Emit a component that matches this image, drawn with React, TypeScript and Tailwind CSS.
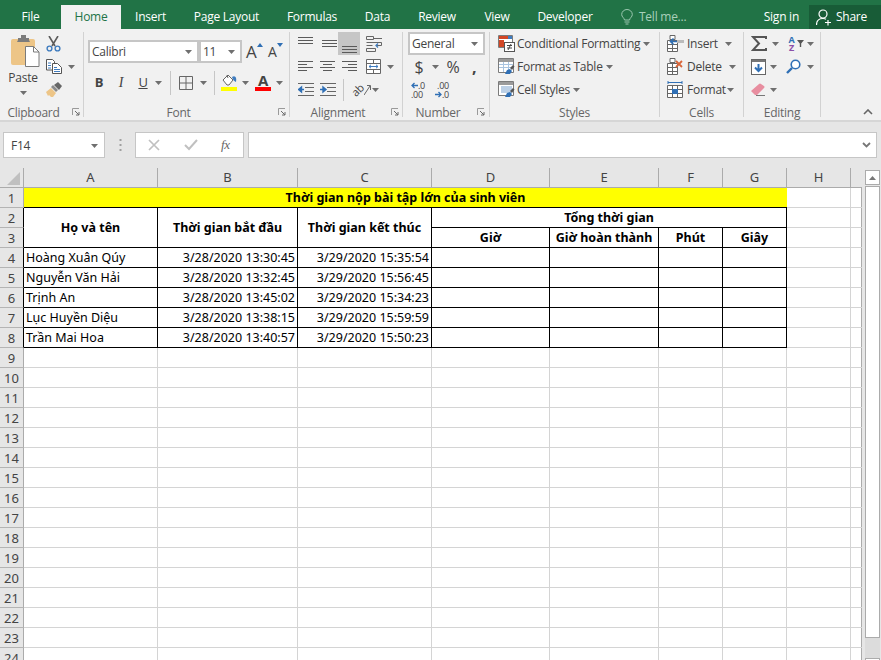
import type { ReactNode } from "react";

const Caret = ({ className = "" }: { className?: string }) => (
  <svg width="7" height="4" viewBox="0 0 7 4" className={`shrink-0 ${className}`}>
    <path d="M0 0h7L3.5 4z" fill="#6f6f6f" />
  </svg>
);

const Launcher = ({ className }: { className: string }) => (
  <svg width="8" height="8" viewBox="0 0 8 8" className={`absolute bottom-[1px] ${className}`}>
    <path d="M.5 7V.5H7" fill="none" stroke="#9a9a9a" />
    <path d="M3 3l4 4M7 4v3H4" fill="none" stroke="#6a6a6a" />
  </svg>
);

const Group = ({ label, className, children, launcher }: { label: string; className: string; children: ReactNode; launcher?: string }) => (
  <div className={`relative h-[85px] shrink-0 border-r border-[#d2d2d2] ${className}`}>
    <div className="h-[72px]">{children}</div>
    <div className={`h-[13px] text-center text-[12px] leading-[17px] text-[#666] ${launcher ? "pr-[16px]" : ""}`}>{label}</div>
    {launcher && <Launcher className={launcher} />}
  </div>
);

const Row = ({ className = "", children }: { className?: string; children: ReactNode }) => (
  <div className={`flex h-[23px] items-center whitespace-nowrap ${className}`}>{children}</div>
);

const Lines = ({ ys, x1 = [0, 0, 0, 0], x2 = [15, 15, 15, 15] }: { ys: number[]; x1?: number[]; x2?: number[] }) => (
  <svg width="15" height="13" viewBox="0 0 15 13">
    {ys.map((y, i) => (
      <path key={y} d={`M${x1[i]} ${y + 0.5}H${x2[i]}`} stroke="#5a5a5a" />
    ))}
  </svg>
);

const PasteIcon = () => (
  <svg width="29" height="32" viewBox="0 0 29 32" className="ml-[4px] mt-[3px]">
    <rect x="0" y="4" width="24" height="26" rx="2" fill="#edc587" />
    <path d="M7 5V3h3V0h5v3h3v2l1 2H6z" fill="#7c7c7c" />
    <path d="M14.5 11.5h8l5.5 5.5v14.5H14.5z" fill="#fff" stroke="#7b7b7b" />
    <path d="M22.5 11.5V17H28" fill="none" stroke="#7b7b7b" />
  </svg>
);

const Scissors = () => (
  <svg width="15" height="16" viewBox="0 0 15 16">
    <path d="M3 0l6 10M12 0L6 10" stroke="#5b5b5b" strokeWidth="1.6" fill="none" />
    <circle cx="3.5" cy="12.5" r="2.4" fill="none" stroke="#3f7cbf" strokeWidth="1.4" />
    <circle cx="11.5" cy="12.5" r="2.4" fill="none" stroke="#3f7cbf" strokeWidth="1.4" />
  </svg>
);

const CopyIcon = () => (
  <svg width="16" height="15" viewBox="0 0 16 15">
    <path d="M.5.5h6l2 2V11H.5z" fill="#fff" stroke="#555" />
    <path d="M6.5 4.5h5l4 4v6h-9z" fill="#fff" stroke="#555" />
    <path d="M2 4h3M2 6.500h3M2 9h3M8 8.500h3M8 10.500h6M8 12.500h6" stroke="#3f7cbf" />
  </svg>
);

const Brush = () => (
  <svg width="16" height="15" viewBox="0 0 16 15">
    <path d="M0 10l5-4 5 5-3 4H5L3 13l-1 1z" fill="#edc587" />
    <path d="M5 5l2-2 5 5-2 2z" fill="#8a8a8a" />
    <path d="M8 3l4-3 4 4-3 4z" fill="#666" />
  </svg>
);

const Combo = ({ text, className }: { text: string; className: string }) => (
  <div className={`flex h-[23px] items-center justify-between border-2 border-[#c6c6c6] bg-white pl-[2px] pr-[5px] text-[#444] ${className}`}>
    <span>{text}</span>
    <Caret />
  </div>
);

const FillIcon = () => (
  <svg width="16" height="12" viewBox="0 0 16 12">
    <path d="M2 6l5-5 5 5-4 5H6z" fill="#fff" stroke="#666" />
    <path d="M6 1l1 3" stroke="#666" />
    <path d="M11 3c3-2 5 0 4 5-2-1-3-2-4-5z" fill="#3f7cbf" />
  </svg>
);

const WrapIcon = () => (
  <svg width="17" height="16" viewBox="0 0 17 16">
    <path d="M.5.5h7v3h-7zM.5 6.500h9M.5 9.500h6M.5 12.500h9v3h-9z" fill="none" stroke="#666" />
    <path d="M8 2.500h8M9 6.500h6.500v3H10" fill="none" stroke="#666" />
    <path d="M12 7.500l-2 2 2 2" fill="none" stroke="#3f7cbf" strokeWidth="1.3" />
  </svg>
);

const MergeIcon = () => (
  <svg width="15" height="15" viewBox="0 0 15 15">
    <path d="M.5.5h14v14H.5zM.5 4.500h14M.5 10.500h14M7.500.5v4M7.500 10.500v4" fill="#fff" stroke="#666" />
    <path d="M3 7.500h9M5 5.800l-2 1.700 2 1.700M10 5.800l2 1.700-2 1.700" fill="none" stroke="#3f7cbf" />
  </svg>
);

const IndentIcon = ({ flip }: { flip?: boolean }) => (
  <svg width="16" height="13" viewBox="0 0 16 13">
    <path d="M0 .5h16M7 4.500h9M7 8.500h9M0 12.500h16" stroke="#666" />
    {flip ? (
      <path d="M0 6.500h5M3 4l3 2.500L3 9z" stroke="#2f6fb5" strokeWidth="1.4" fill="#2f6fb5" />
    ) : (
      <path d="M1 6.500h5M3.500 4L.5 6.500l3 2.500z" stroke="#2f6fb5" strokeWidth="1.4" fill="#2f6fb5" />
    )}
  </svg>
);

const StyleIcon = ({ kind }: { kind: "cond" | "table" | "cell" }) => (
  <svg width="17" height="17" viewBox="0 0 17 17" className="shrink-0">
    {kind === "cond" ? (
      <>
        <path d="M.5.5h14v12H.5z" fill="#fff" stroke="#7b7b7b" />
        <rect x="1" y="1" width="6" height="3" fill="#d24726" />
        <rect x="7" y="1" width="3" height="3" fill="#d24726" />
        <rect x="10" y="1" width="4" height="3" fill="#3f7cbf" />
        <rect x="1" y="5" width="5" height="7" fill="#d24726" />
        <rect x="6.500" y="7.500" width="10" height="9" fill="#fff" stroke="#555" />
        <path d="M9 10.500h5M9 13h5M10 15l3-6" stroke="#444" />
      </>
    ) : (
      <>
        <path d="M.5.5h15v14H.5z" fill="#fff" stroke="#7b7b7b" />
        <rect x="1" y="1" width="14" height="3" fill="#9a9a9a" />
        {kind === "table" ? (
          <path d="M1 6.500h14M1 9.500h14M5.500 4v10M10.500 4v10" stroke="#a9c4e0" />
        ) : (
          <rect x="3" y="5" width="11" height="7" fill="#bcd0e6" />
        )}
        <path d="M7 16l2-4 3-1 2 2-2 3z" fill="#2f6fb5" />
        <path d="M12 10l3-3 1.500 1.500L14 12z" fill="#555" />
      </>
    )}
  </svg>
);

const CellIcon = ({ kind }: { kind: "insert" | "delete" | "format" }) => (
  <svg width="17" height="17" viewBox="0 0 17 17" className="shrink-0">
    {kind === "format" ? (
      <>
        <path d="M1 1.500h14M1 0v3M15 0v3" stroke="#2f6fb5" />
        <path d="M.5 4.500h15v12H.5zM.5 8.500h15M.5 12.500h15M5.500 4.500v12M10.500 4.500v12" fill="#fff" stroke="#666" />
        <rect x="5" y="8" width="6" height="5" fill="#2f6fb5" />
      </>
    ) : (
      <>
        <path d="M.5 5.500h10v11H.5zM.5 9.500h10M.5 13.500h10M5.500 5.500v11" fill="#fff" stroke="#666" />
        <path d="M3 .5h5v4H3z" fill="#fff" stroke="#666" />
        {kind === "insert" ? (
          <>
            <rect x="10" y="5" width="7" height="3" fill="#bbb" />
            <path d="M10 6.500H4M6.500 3.500l-3 3 3 3" fill="none" stroke="#2f6fb5" strokeWidth="1.6" />
          </>
        ) : (
          <path d="M9 3l6 6M15 3l-6 6" stroke="#d9663a" strokeWidth="1.8" />
        )}
      </>
    )}
  </svg>
);

const Sigma = () => (
  <svg width="16" height="15" viewBox="0 0 16 15">
    <path d="M15 3V1H2l6 6.500L2 14h13v-2" fill="none" stroke="#555" strokeWidth="2" />
  </svg>
);

const FillDown = () => (
  <svg width="15" height="16" viewBox="0 0 15 16">
    <rect x=".5" y=".5" width="14" height="15" fill="#fff" stroke="#666" />
    <rect x="1" y="1" width="13" height="2" fill="#777" />
    <path d="M7.500 5v7M4 8.500l3.500 3.500L11 8.500" fill="none" stroke="#2f6fb5" strokeWidth="2" />
  </svg>
);

const FindIcon = () => (
  <svg width="15" height="15" viewBox="0 0 15 15">
    <circle cx="9.500" cy="5.500" r="4.300" fill="#fff" stroke="#2f6fb5" strokeWidth="1.6" />
    <path d="M6 9l-5 5" stroke="#2f6fb5" strokeWidth="2.400" />
  </svg>
);

const Eraser = () => (
  <svg width="16" height="14" viewBox="0 0 16 14">
    <path d="M0 8l8-7q1-1 2 0l3 2q1 1 0 2l-7 7H4z" fill="#e88ea0" />
    <path d="M5 12.500h9" stroke="#777" />
  </svg>
);

const PersonPlus = () => (
  <svg width="16" height="17" viewBox="0 0 16 17">
    <circle cx="7" cy="5" r="4" fill="none" stroke="#fff" strokeWidth="1.2" />
    <path d="M.5 16c0-4 2.500-6.500 6.500-6.500 1.200 0 2.200.2 3 .7" fill="none" stroke="#fff" strokeWidth="1.2" />
    <path d="M12 11v5.500M9 13.500h6" stroke="#fff" strokeWidth="1.2" />
  </svg>
);

const Bulb = () => (
  <svg width="12" height="17" viewBox="0 0 12 17">
    <path d="M3.500 11C3 8.500.7 8 .7 5.500a5.300 5 0 0 1 10.600 0c0 2.500-2.300 3-2.800 5.500z" fill="none" stroke="#9cc7b0" />
    <path d="M3.500 13h5M4.500 15h3" stroke="#9cc7b0" />
  </svg>
);

const tabs = [
  ["File", "w-[61px]"],
  ["Home", "w-[60px]"],
  ["Insert", "w-[59px]"],
  ["Page Layout", "w-[93px]"],
  ["Formulas", "w-[78px]"],
  ["Data", "w-[53px]"],
  ["Review", "w-[66px]"],
  ["View", "w-[54px]"],
  ["Developer", "w-[82px]"],
];

const Ribbon = () => (
  <>
    <div className="flex h-[29px] items-end bg-[#217346] text-white">
      {tabs.map(([name, w]) =>
        name === "Home" ? (
          <div key={name} className={`flex h-[24px] items-center justify-center bg-[#f1f1f1] text-[#217346] ${w}`}>{name}</div>
        ) : (
          <div key={name} className={`flex h-[24px] items-center justify-center ${w}`}>{name}</div>
        )
      )}
      <div className="ml-[15px] flex h-[24px] items-center gap-[6px] text-[#a9d0bb]">
        <Bulb />
        <span>Tell me...</span>
      </div>
      <div className="ml-auto flex h-[24px] items-center">Sign in</div>
      <div className="ml-[10px] flex h-[24px] w-[72px] items-center gap-[4px] bg-[#185c37] pl-[7px]">
        <PersonPlus />
        <span>Share</span>
      </div>
    </div>

    <div className="relative flex h-[93px] border-b-2 border-[#d6d6d6] bg-[#f1f1f1] pt-[3px] text-[#444]">
      <Group label="Clipboard" className="w-[84px]" launcher="right-[3px]">
        <div className="flex">
          <div className="flex w-[46px] flex-col items-center">
            <PasteIcon />
            <span className="mt-[3px] leading-[16px]">Paste</span>
            <Caret className="mt-[5px]" />
          </div>
          <div className="flex flex-col">
            <Row><Scissors /></Row>
            <Row className="gap-[3px]"><CopyIcon /><Caret className="ml-[3px]" /></Row>
            <Row><Brush /></Row>
          </div>
        </div>
      </Group>

      <Group label="Font" className="w-[206px]" launcher="right-[3px]">
        <div className="pl-[4px] pt-[8px]">
          <div className="flex items-center">
            <Combo text="Calibri" className="w-[111px]" />
            <Combo text="11" className="w-[43px]" />
            <div className="ml-[4px] flex w-[22px] items-start">
              <span className="text-[17px] leading-[20px]">A</span>
              <svg width="6" height="4" viewBox="0 0 6 4" className="mt-[1px]"><path d="M3 0l3 4H0z" fill="#2f6fb5" /></svg>
            </div>
            <div className="flex items-start">
              <span className="text-[14px] leading-[20px]">A</span>
              <svg width="6" height="4" viewBox="0 0 6 4" className="mt-[1px]"><path d="M0 0h6L3 4z" fill="#2f6fb5" /></svg>
            </div>
          </div>
          <Row className="mt-[8px]">
            <span className="w-[22px] text-center text-[13px] font-bold">B</span>
            <span className="w-[22px] text-center font-['Liberation_Serif',serif] text-[14px] italic">I</span>
            <span className="w-[22px] text-center text-[13px] underline">U</span>
            <Caret className="ml-[1px]" />
            <div className="ml-[8px] h-[24px] w-px bg-[#c6c6c6]" />
            <svg width="14" height="14" viewBox="0 0 14 14" className="ml-[8px]"><path d="M.5.5h13v13H.5zM7 .5v13M.5 7h13" fill="none" stroke="#666" /></svg>
            <Caret className="ml-[7px]" />
            <div className="ml-[7px] h-[24px] w-px bg-[#c6c6c6]" />
            <div className="ml-[6px] flex flex-col">
              <FillIcon />
              <div className="mt-[1px] h-[4px] w-[16px] bg-[#ffff00]" />
            </div>
            <Caret className="ml-[5px]" />
            <div className="ml-[6px] flex w-[16px] flex-col items-center">
              <span className="h-[12px] text-[15px] font-bold leading-[13px]">A</span>
              <div className="mt-[1px] h-[4px] w-[16px] bg-[#ff0000]" />
            </div>
            <Caret className="ml-[5px]" />
          </Row>
        </div>
      </Group>

      <Group label="Alignment" className="w-[113px]" launcher="right-[3px]">
        <div className="pl-[8px]">
          <Row>
            <div className="flex w-[22px] pb-[2px]"><Lines ys={[1, 4, 7]} /></div>
            <div className="flex w-[18px] justify-center"><Lines ys={[3, 6, 9]} /></div>
            <div className="flex h-[23px] w-[22px] items-end justify-center bg-[#c6c6c6] pb-[1px]"><Lines ys={[5, 8, 11]} /></div>
            <div className="ml-[6px]"><WrapIcon /></div>
          </Row>
          <Row>
            <div className="w-[22px]"><Lines ys={[1, 4, 7, 10]} x2={[15, 9, 15, 9]} /></div>
            <div className="w-[22px]"><Lines ys={[1, 4, 7, 10]} x1={[0, 3, 0, 3]} x2={[15, 12, 15, 12]} /></div>
            <div className="w-[24px]"><Lines ys={[1, 4, 7, 10]} x1={[0, 6, 0, 6]} /></div>
            <MergeIcon />
            <Caret className="ml-[6px]" />
          </Row>
          <Row>
            <IndentIcon />
            <div className="ml-[6px]"><IndentIcon flip /></div>
            <div className="ml-[7px] h-[22px] w-px bg-[#c6c6c6]" />
            <span className="ml-[7px] inline-block w-[13px] -rotate-45 text-[11px] leading-[11px]">ab</span>
            <svg width="7" height="12" viewBox="0 0 7 12"><path d="M0 11L6 2M3 1.500h3.500V6" fill="none" stroke="#666" /></svg>
            <Caret className="ml-[1px]" />
          </Row>
        </div>
      </Group>

      <Group label="Number" className="w-[87px]" launcher="right-[4px]">
        <div className="pl-[5px]">
          <Combo text="General" className="w-[77px]" />
          <Row className="text-[16px]">
            <span className="w-[22px] text-center">$</span>
            <Caret className="ml-[2px]" />
            <span className="ml-[3px] w-[22px] text-center">%</span>
            <span className="ml-[8px] font-bold">,</span>
          </Row>
          <Row className="pl-[3px] text-[9px] leading-[9px]">
            <div className="flex w-[24px] flex-col">
              <span className="flex items-center"><svg width="7" height="7" viewBox="0 0 7 7"><path d="M7 3.500H1M3.500 1L1 3.500 3.500 6" fill="none" stroke="#2f6fb5" strokeWidth="1.300" /></svg>.0</span>
              <span>.00</span>
            </div>
            <div className="flex flex-col items-end">
              <span>.00</span>
              <span className="flex items-center"><svg width="7" height="7" viewBox="0 0 7 7"><path d="M0 3.500h6M3.500 1L6 3.500 3.500 6" fill="none" stroke="#2f6fb5" strokeWidth="1.300" /></svg>.0</span>
            </div>
          </Row>
        </div>
      </Group>

      <Group label="Styles" className="w-[170px]">
        <div className="pl-[8px]">
          <Row className="gap-[2px]"><StyleIcon kind="cond" /><span>Conditional Formatting</span><Caret className="ml-[1px]" /></Row>
          <Row className="gap-[2px]"><StyleIcon kind="table" /><span>Format as Table</span><Caret className="ml-[1px]" /></Row>
          <Row className="gap-[2px]"><StyleIcon kind="cell" /><span>Cell Styles</span><Caret className="ml-[1px]" /></Row>
        </div>
      </Group>

      <Group label="Cells" className="w-[84px]">
        <div className="pl-[7px]">
          <Row><CellIcon kind="insert" /><span className="ml-[3px] w-[38px]">Insert</span><Caret /></Row>
          <Row><CellIcon kind="delete" /><span className="ml-[3px] w-[42px]">Delete</span><Caret /></Row>
          <Row><CellIcon kind="format" /><span className="ml-[3px] w-[40px]">Format</span><Caret /></Row>
        </div>
      </Group>

      <Group label="Editing" className="w-[77px]">
        <div className="grid grid-cols-[35px_34px] pl-[7px]">
          <Row><Sigma /><Caret className="ml-[5px]" /></Row>
          <Row>
            <div className="flex w-[11px] flex-col text-center text-[9px] font-bold leading-[8px]">
              <span className="text-[#2f6fb5]">A</span>
              <span className="text-[#8a4fa8]">Z</span>
            </div>
            <svg width="7" height="7" viewBox="0 0 7 7"><path d="M0 0h7L4.200 3.500V7H2.800V3.500z" fill="#555" /></svg>
            <Caret className="ml-[3px]" />
          </Row>
          <Row><FillDown /><Caret className="ml-[4px]" /></Row>
          <Row><FindIcon /><Caret className="ml-[6px]" /></Row>
          <Row><Eraser /><Caret className="ml-[3px]" /></Row>
        </div>
      </Group>

      <svg width="10" height="6" viewBox="0 0 10 6" className="absolute bottom-[5px] right-[8px]">
        <path d="M1 5l4-4 4 4" fill="none" stroke="#666" strokeWidth="1.600" />
      </svg>
    </div>
  </>
);

const FormulaBar = () => (
  <div className="flex h-[46px] items-start bg-[#e6e6e6] pl-[3px] pt-[10px] text-[#444]">
    <div className="flex h-[26px] w-[102px] items-center justify-between border border-[#c6c6c6] bg-white pl-[7px] pr-[6px] pt-[1px]">
      <span>F14</span>
      <Caret />
    </div>
    <svg width="3" height="12" viewBox="0 0 3 12" className="ml-[14px] mt-[7px]"><path d="M1.500 0v2M1.500 5v2M1.500 10v2" stroke="#a0a0a0" strokeWidth="2" /></svg>
    <div className="ml-[13px] flex h-[26px] w-[109px] items-center border border-[#c6c6c6] bg-white">
      <svg width="12" height="12" viewBox="0 0 12 12" className="ml-[12px]"><path d="M1 1l10 10M11 1L1 11" stroke="#c0c0c0" strokeWidth="1.700" /></svg>
      <svg width="14" height="12" viewBox="0 0 14 12" className="ml-[24px]"><path d="M1 6l4 4 8-9" fill="none" stroke="#c0c0c0" strokeWidth="2" /></svg>
      <span className="ml-[23px] font-['Liberation_Serif',serif] text-[13px] italic text-[#666]">fx</span>
    </div>
    <div className="ml-[4px] flex h-[26px] w-[629px] items-center justify-end border border-[#c6c6c6] bg-white pr-[5px]">
      <svg width="9" height="6" viewBox="0 0 9 6"><path d="M1 1l3.500 3.500L8 1" fill="none" stroke="#777" strokeWidth="1.800" /></svg>
    </div>
  </div>
);

const ColHead = ({ label }: { label: string }) => (
  <div className="flex items-center justify-center border-b border-r border-[#ababab] bg-[#e6e6e6] pt-[1px] text-[13px] text-[#444]">{label}</div>
);

const RowHead = ({ n, dark }: { n: number; dark?: boolean }) => (
  <div className={`flex items-center justify-center border-b border-b-[#b4b4b4] border-r bg-[#e6e6e6] pt-[2px] text-[13px] text-[#444] ${dark ? "border-r-black" : "border-r-[#ababab]"}`}>{n}</div>
);

const Blank = ({ last }: { last?: boolean }) => (
  <div className={`border-b border-[#d4d4d4] ${last ? "" : "border-r"}`} />
);

const Cell = ({ children, className = "" }: { children?: ReactNode; className?: string }) => (
  <div className={`flex items-center overflow-hidden whitespace-nowrap border-b border-r border-black px-[2px] pt-[1px] text-black ${className}`}>{children}</div>
);

const people = [
  ["Hoàng Xuân Qúy", "3/28/2020 13:30:45", "3/29/2020 15:35:54"],
  ["Nguyễn Văn Hải", "3/28/2020 13:32:45", "3/29/2020 15:56:45"],
  ["Trịnh An", "3/28/2020 13:45:02", "3/29/2020 15:34:23"],
  ["Lục Huyền Diệu", "3/28/2020 13:38:15", "3/29/2020 15:59:59"],
  ["Trần Mai Hoa", "3/28/2020 13:40:57", "3/29/2020 15:50:23"],
];

const emptyRows = Array.from({ length: 16 }, (_, i) => i + 9);

const Sheet = () => (
  <div className="flex h-[492px] overflow-hidden tracking-normal">
    <div className="grid h-fit w-[862px] shrink-0 grid-cols-[24px_134px_140px_134px_118px_109px_64px_64px_64px_11px] auto-rows-[20px] border-r border-[#ababab] bg-white font-['Noto_Sans',sans-serif] text-[12.5px]">
      <div className="flex items-end justify-end border-b border-r border-[#ababab] bg-[#e6e6e6] pb-[2px] pr-[3px]">
        <svg width="13" height="13" viewBox="0 0 13 13"><path d="M13 0v13H0z" fill="#c0c0c0" /></svg>
      </div>
      {["A", "B", "C", "D", "E", "F", "G", "H"].map((c) => <ColHead key={c} label={c} />)}
      <div className="border-b border-[#ababab] bg-[#e6e6e6]" />

      <RowHead n={1} />
      <div className="col-span-7 flex items-center justify-center border-b border-b-black bg-[#ffff00] pt-[1px] font-bold text-black">Thời gian nộp bài tập lớn của sinh viên</div>
      <Blank /><Blank last />

      <RowHead n={2} dark />
      <Cell className="row-span-2 justify-center font-bold">Họ và tên</Cell>
      <Cell className="row-span-2 justify-center font-bold">Thời gian bắt đầu</Cell>
      <Cell className="row-span-2 justify-center font-bold">Thời gian kết thúc</Cell>
      <Cell className="col-span-4 justify-center font-bold">Tổng thời gian</Cell>
      <Blank /><Blank last />

      <RowHead n={3} dark />
      <Cell className="justify-center font-bold">Giờ</Cell>
      <Cell className="justify-center font-bold">Giờ hoàn thành</Cell>
      <Cell className="justify-center font-bold">Phút</Cell>
      <Cell className="justify-center font-bold">Giây</Cell>
      <Blank /><Blank last />

      {people.map(([name, start, end], i) => (
        <div key={name} className="contents">
          <RowHead n={i + 4} dark />
          <Cell className="pt-[2px]">{name}</Cell>
          <Cell className="justify-end pt-[2px]">{start}</Cell>
          <Cell className="justify-end pt-[2px]">{end}</Cell>
          <Cell /><Cell /><Cell /><Cell />
          <Blank /><Blank last />
        </div>
      ))}

      {emptyRows.map((n) => (
        <div key={n} className="contents">
          <RowHead n={n} />
          <Blank /><Blank /><Blank /><Blank /><Blank /><Blank /><Blank /><Blank /><Blank last />
        </div>
      ))}
    </div>

    <div className="flex w-[19px] flex-col bg-[#e6e6e6] pl-[3px] pt-[2px]">
      <div className="flex h-[15px] w-[15px] shrink-0 items-center justify-center border border-[#ababab] bg-white">
        <svg width="7" height="4" viewBox="0 0 7 4"><path d="M3.500 0L7 4H0z" fill="#777" /></svg>
      </div>
      <div className="mt-[1px] h-[452px] w-[15px] shrink-0 border border-[#ababab] bg-white" />
      <div className="h-[20px] w-[15px] shrink-0 bg-[#dcdcdc]" />
      <div className="h-[10px] w-[15px] shrink-0 border border-[#ababab] bg-white" />
    </div>
  </div>
);

export default function App() {
  return (
    <div className="h-[660px] w-[881px] overflow-hidden bg-[#e6e6e6] font-['Open_Sans',sans-serif] text-[12px] tracking-[-0.25px]">
      <Ribbon />
      <FormulaBar />
      <Sheet />
    </div>
  );
}
